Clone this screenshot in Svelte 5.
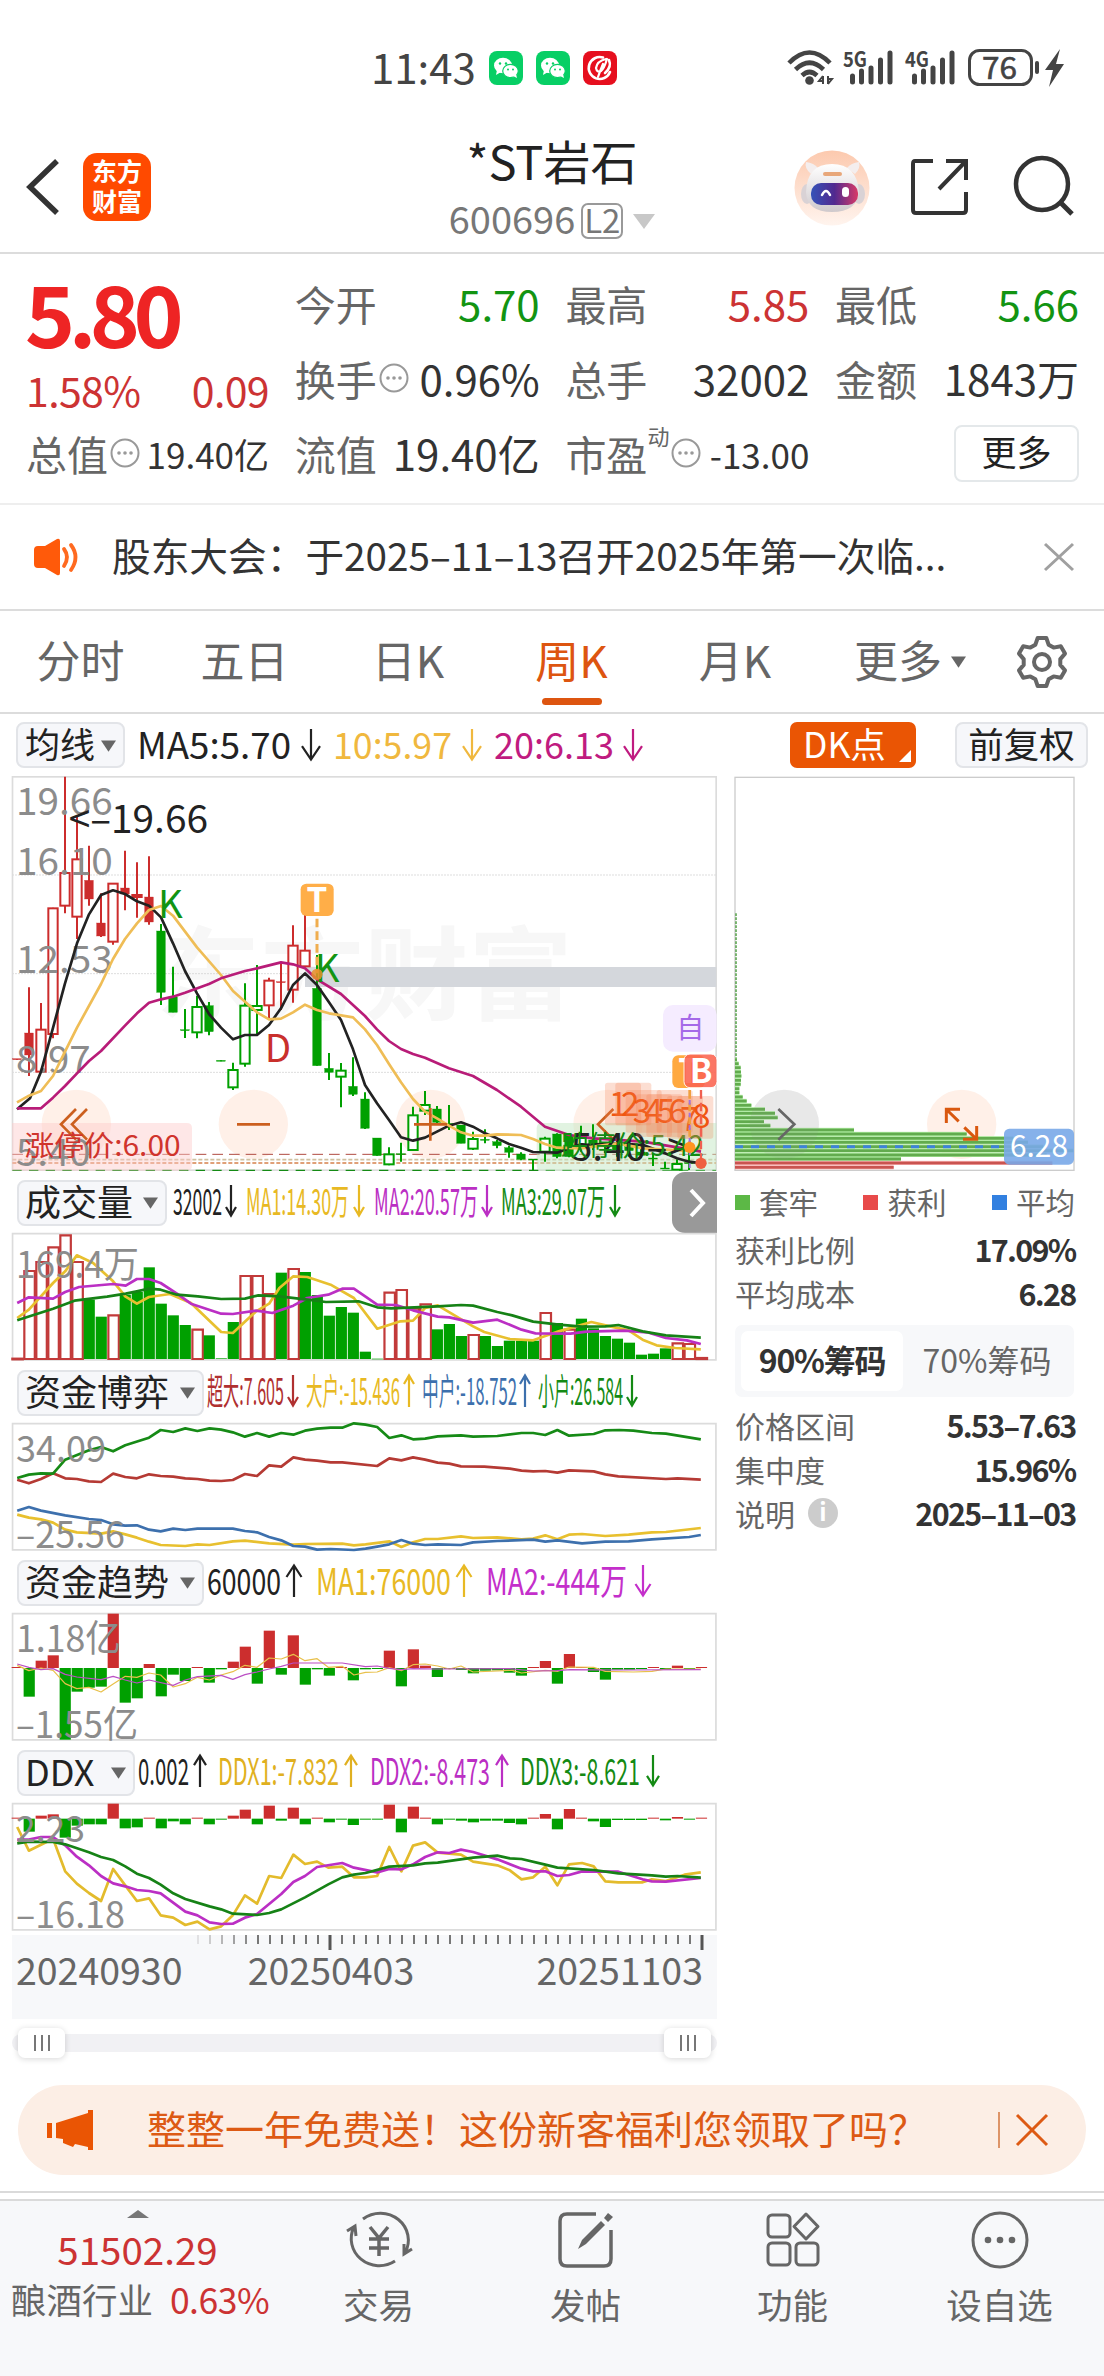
<script>
  // Quote summary
  const stats = [
    { label: '今开', value: '5.70', tone: 'down' },
    { label: '最高', value: '5.85', tone: 'up' },
    { label: '最低', value: '5.66', tone: 'down' },
    { label: '换手', value: '0.96%', hint: true },
    { label: '总手', value: '32002' },
    { label: '金额', value: '1843万' }
  ];

  const tabs = ['分时', '五日', '日K', '周K', '月K'];
  let activeTab = $state('周K');
  let chipRange = $state('90%筹码');

  // Candles: [color, hollow, high, top, bottom, low], one per week
  const candles = [
    ['r', 0, 897, 896, 899, 899], ['r', 0, 682, 819, 885, 948], ['r', 1, 729, 809, 935, 938], ['r', 1, 443, 445, 822, 835],
    ['r', 1, 50, 339, 437, 460], ['r', 1, 165, 298, 470, 537], ['r', 0, 257, 361, 417, 437], ['r', 0, 400, 489, 528, 531],
    ['r', 1, 370, 371, 545, 554], ['r', 0, 272, 384, 402, 451], ['r', 1, 307, 405, 411, 473], ['r', 0, 289, 411, 486, 494],
    ['g', 0, 492, 513, 697, 735], ['g', 0, 620, 711, 757, 757], ['g', 0, 747, 809, 812, 834], ['g', 1, 707, 741, 817, 835],
    ['g', 0, 726, 737, 815, 826], ['g', 0, 901, 901, 904, 904], ['g', 1, 908, 930, 982, 990], ['g', 1, 670, 737, 911, 920],
    ['g', 1, 615, 738, 750, 826], ['r', 1, 653, 662, 736, 775], ['r', 0, 608, 665, 668, 750], ['r', 1, 496, 557, 689, 728],
    ['r', 1, 450, 572, 619, 620], ['g', 0, 585, 685, 917, 917], ['g', 0, 879, 925, 937, 960], ['g', 1, 909, 932, 950, 1042],
    ['g', 0, 892, 979, 1003, 1008], ['g', 0, 997, 1017, 1105, 1107], ['g', 0, 1134, 1134, 1187, 1187], ['g', 1, 1162, 1183, 1213, 1216],
    ['g', 0, 1148, 1181, 1184, 1205], ['g', 1, 1040, 1066, 1170, 1173], ['g', 1, 993, 1035, 1052, 1065], ['g', 0, 1038, 1047, 1087, 1090],
    ['g', 0, 1035, 1090, 1093, 1110], ['g', 0, 1095, 1095, 1150, 1150], ['g', 1, 1115, 1137, 1166, 1170], ['g', 0, 1108, 1138, 1141, 1150],
    ['g', 0, 1140, 1145, 1157, 1165], ['g', 0, 1157, 1163, 1177, 1193], ['g', 0, 1177, 1182, 1198, 1201], ['g', 0, 1197, 1197, 1200, 1230],
    ['g', 1, 1130, 1136, 1175, 1205], ['g', 0, 1120, 1122, 1190, 1195], ['g', 0, 1120, 1125, 1190, 1192], ['g', 1, 1097, 1130, 1160, 1175],
    ['g', 0, 1093, 1140, 1160, 1170], ['g', 1, 1110, 1136, 1158, 1180], ['g', 0, 1120, 1150, 1170, 1190], ['g', 0, 1140, 1160, 1172, 1190],
    ['g', 0, 1150, 1176, 1186, 1195], ['g', 0, 1180, 1194, 1197, 1218], ['g', 0, 1205, 1224, 1227, 1227], ['g', 1, 1198, 1212, 1229, 1230],
    ['g', 0, 1150, 1208, 1211, 1230]
  ];
  const candleX = (i) => 51 + 36 * i;

  const priceLines = [
    { color: '#222', points: '51,1048 90,1015 123,935 160,800 195,670 231,550 267,463 303,405 339,391 375,402 411,424 447,437 483,472 519,550 555,633 591,700 627,762 663,803 699,838 735,825 771,825 807,795 843,745 879,675 915,640 951,675 987,727 1023,780 1059,868 1095,975 1131,1030 1167,1080 1203,1132 1239,1142 1275,1133 1311,1115 1347,1097 1383,1087 1419,1100 1455,1120 1491,1135 1527,1152 1563,1163 1599,1176 1671,1178 1707,1165 1743,1155 1850,1150 1930,1155 1995,1180 2031,1195 2067,1205 2103,1210' },
    { color: '#efbd56', points: '51,1027 87,1007 123,993 159,948 195,875 231,803 303,672 339,597 375,537 411,490 447,450 483,438 519,467 591,562 663,645 699,693 771,757 807,778 843,776 879,757 915,734 951,750 987,760 1059,772 1095,808 1131,855 1167,912 1203,967 1239,1017 1275,1055 1311,1075 1347,1097 1383,1117 1419,1127 1455,1127 1491,1123 1563,1125 1599,1137 1635,1152 1671,1163 1743,1165 1850,1150 1930,1165 2050,1172 2103,1165' },
    { color: '#b81c78', points: '51,1045 123,1045 159,1013 195,978 231,940 267,903 303,873 375,797 411,760 447,728 483,718 519,710 555,698 627,672 663,655 735,633 771,625 843,607 879,613 915,625 951,658 1023,702 1059,735 1095,768 1131,808 1167,843 1203,867 1239,882 1275,893 1347,925 1419,948 1491,990 1563,1040 1635,1100 1707,1125 1780,1135 1930,1145 2000,1157 2050,1165 2103,1175' }
  ];

  const priceLabels = [['19.66', 815], ['16.10', 875], ['12.53', 973], ['8.97', 1073], ['5.40', 1166]];

  // Overlapping sequence tiles near the last candles: [digit, tile top, baseline]
  const tiles = [[1, 968, 1067], [2, 968, 1067], [3, 990, 1090], [4, 1003, 1088], [5, 1003, 1088], [6, 990, 1088], [7, 1008, 1112], [8, 1008, 1105]];

  const volume = 'r565 r302 r275 r231 r195 r275 g390 g441 r435 g375 g367 g293 g402 g437 g466 r478 g497 g566 g457 r317 r317 r371 g309 r296 g307 g376 g438 g412 g429 g546 g567 r367 r359 r415 r402 g479 g463 g499 r494 g499 g529 g513 g513 g513 r428 g460 r478 g447 g476 g499 g507 g519 g555 g552 g536 r519 r521 r563';
  const trend = 'r352 g441 r333 r317 g570 g426 g414 g411 r192 g459 g446 r343 g440 g375 g394 r352 g399 g359 r336 r291 g402 r243 g375 r257 g405 g359 g378 r352 g392 g359 g358 r303 g410 r299 r348 g382 g358 g361 g371 g363 g362 g369 g378 r352 r334 g402 r313 r352 g367 g390 g360 g360 g358 r352 g360 r348 g358 r352';
  const ddx = 'r234 g276 r228 r224 g294 g258 g254 g254 r192 g266 g263 r234 g266 g245 g254 r234 g254 g240 r228 r210 g254 r198 g243 r204 g254 r234 g248 g240 g256 g240 g240 r195 g278 r201 r234 g254 g240 g243 g248 g243 g243 g250 g254 r234 r223 g269 r208 r234 g245 g262 g241 g241 g241 r234 g242 r232 g240 r234';

  const panels = [
    {
      name: '成交量',
      width: 150,
      arrow: 10,
      items: [
        ['32002', 173, 49, '#222', 231, 'down'],
        ['MA1:14.30万', 246, 103, '#e8b923', 359, 'down'],
        ['MA2:20.57万', 374, 104, '#bb2fc4', 487, 'down'],
        ['MA3:29.07万', 501, 104, '#148a14', 615, 'down']
      ],
      bars: volume, zero: 568, outlined: true,
      labels: [{ text: '169.4万', at: 'upper', width: 123 }],
      lines: [
        { color: '#e8c02f', points: '37,445 62,420 114,340 140,305 165,257 200,280 243,335 269,380 294,402 320,382 365,373 410,400 475,487 500,490 550,425 578,402 600,355 630,320 660,322 710,345 760,385 810,477 860,455 887,453 913,415 940,407 1016,470 1040,487 1095,508 1145,512 1200,485 1270,457 1310,470 1350,482 1380,510 1410,527 1450,535 1505,539' },
        { color: '#bb2fc4', points: '37,400 62,383 114,387 140,367 170,352 243,343 270,348 294,328 320,328 345,340 380,372 410,402 475,432 500,433 550,423 585,430 630,408 660,385 705,375 735,357 760,357 810,405 850,406 887,422 940,441 965,443 1016,459 1068,450 1120,480 1150,491 1225,492 1260,486 1340,483 1390,488 1430,505 1475,512 1505,523' },
        { color: '#168216', points: '37,452 114,417 160,393 230,381 270,372 294,365 320,357 345,360 380,375 425,380 475,388 526,387 555,377 600,380 660,390 700,397 770,395 810,413 840,416 940,410 990,406 1016,408 1068,427 1100,437 1145,456 1200,465 1250,471 1300,470 1328,466 1380,485 1430,497 1505,504' }
      ]
    },
    {
      name: '资金博弈',
      width: 187,
      arrow: 10,
      items: [
        ['超大:7.605', 207, 77, '#b03030', 293, 'down'],
        ['大户:-15.436', 306, 94, '#e8b923', 409, 'up'],
        ['中户:-18.752', 422, 95, '#3d70ad', 525, 'up'],
        ['小户:26.584', 538, 85, '#148a14', 632, 'down']
      ],
      bars: '', zero: 0,
      labels: [{ text: '34.09', at: 'top', width: 90 }, { text: '-25.56', at: 'bottom', width: 109 }],
      lines: [
        { color: '#b53a34', points: '37,360 62,371 88,358 114,341 140,356 165,358 191,365 217,367 243,342 269,352 294,356 320,344 345,349 372,351 398,356 424,358 450,363 475,364 500,361 526,343 552,349 578,317 604,321 630,293 655,300 681,303 710,308 735,308 810,319 836,296 862,302 887,293 913,300 940,309 965,312 990,320 1040,321 1095,327 1120,333 1145,335 1171,334 1197,339 1222,332 1275,335 1300,344 1328,350 1430,358 1455,356 1505,360' },
        { color: '#168a16', points: '37,355 62,345 88,341 114,342 140,300 191,272 217,262 243,275 269,257 320,234 345,211 372,217 398,206 424,214 450,206 475,210 500,218 526,231 552,220 578,231 604,220 630,225 655,213 681,207 710,204 735,204 760,191 785,195 810,202 836,235 862,227 887,239 913,237 940,230 990,227 1016,231 1068,229 1120,220 1145,220 1171,226 1197,211 1222,228 1275,223 1300,212 1330,211 1360,213 1400,220 1430,222 1505,239' },
        { color: '#e8c02f', points: '37,465 62,474 88,479 114,489 140,510 165,518 217,522 243,515 269,524 294,534 320,546 345,556 398,559 424,554 450,556 500,545 526,543 578,551 630,555 655,553 735,552 760,557 785,554 836,545 862,562 887,548 913,538 940,538 990,530 1016,535 1068,533 1120,539 1145,537 1171,527 1197,539 1222,525 1250,523 1300,529 1350,525 1400,518 1430,517 1505,505' },
        { color: '#3d70ad', points: '37,453 62,442 88,453 140,467 191,478 217,481 243,494 269,498 294,497 320,510 345,515 372,507 398,511 424,507 500,507 526,514 552,518 578,532 604,542 630,559 655,561 681,570 710,568 760,571 785,567 810,561 836,554 862,541 887,552 913,556 940,554 990,556 1016,548 1068,544 1145,540 1171,546 1197,542 1250,551 1300,546 1350,545 1400,539 1480,532 1505,526' }
      ]
    },
    {
      name: '资金趋势',
      width: 187,
      arrow: 15,
      items: [
        ['60000', 207, 74, '#222', 294, 'up'],
        ['MA1:76000', 316, 135, '#e8b923', 464, 'up'],
        ['MA2:-444万', 486, 141, '#c42fcb', 643, 'down']
      ],
      bars: trend, zero: 355,
      thin: true,
      labels: [{ text: '1.18亿', at: 'top', width: 105 }, { text: '-1.55亿', at: 'bottom', width: 122 }],
      lines: [
        { color: '#e8c04a', points: '37,347 62,363 88,355 114,362 140,402 165,417 191,413 217,427 243,403 269,380 294,383 320,370 345,376 372,412 398,402 424,383 450,391 475,376 500,366 526,347 552,353 578,325 604,328 630,314 655,333 681,327 705,353 735,350 760,376 785,368 810,367 836,354 862,363 887,345 913,343 940,349 965,358 990,349 1016,367 1100,362 1120,370 1171,362 1197,365 1222,352 1275,353 1300,365 1360,367 1400,365 1430,358 1505,358' },
        { color: '#bb4fc4', points: '37,343 62,353 88,360 114,357 140,374 165,382 217,390 243,380 269,391 294,400 320,391 372,407 398,391 424,381 475,377 500,389 526,375 552,367 578,358 604,350 630,340 735,340 785,351 810,349 836,356 862,360 887,357 940,358 1095,357 1145,364 1197,363 1225,360 1330,361 1505,360' }
      ]
    },
    {
      name: 'DDX',
      width: 118,
      arrow: 12,
      items: [
        ['0.002', 138, 51, '#222', 200, 'up'],
        ['DDX1:-7.832', 218, 121, '#e0b020', 351, 'up'],
        ['DDX2:-8.473', 370, 120, '#bb2fc4', 502, 'up'],
        ['DDX3:-8.621', 520, 120, '#148a14', 653, 'down']
      ],
      bars: ddx, zero: 237,
      labels: [{ text: '2.23', at: 'top', width: 69 }, { text: '-16.18', at: 'bottom', width: 109 }],
      lines: [
        { color: '#e3bb2c', points: '37,262 62,333 114,297 140,395 165,432 191,460 217,484 243,388 269,437 294,484 320,476 345,527 372,534 398,556 424,546 450,569 475,560 500,527 526,467 552,492 578,409 604,415 630,345 655,373 681,366 705,384 735,381 760,413 785,413 810,409 836,322 862,395 887,318 913,308 940,339 990,345 1016,366 1068,377 1095,392 1120,419 1145,413 1171,381 1197,437 1222,374 1250,370 1275,380 1300,425 1328,428 1380,428 1400,419 1430,424 1470,405 1505,398' },
        { color: '#bb2fc4', points: '37,300 62,300 88,292 114,292 140,317 165,351 191,377 217,409 243,431 269,440 294,451 320,454 345,461 398,516 424,527 450,548 475,553 500,552 526,534 552,523 604,463 630,427 655,409 681,382 735,370 760,384 810,398 836,388 862,389 887,374 913,352 940,338 965,340 990,330 1016,337 1068,359 1120,387 1145,395 1171,395 1197,409 1222,406 1250,395 1328,396 1380,419 1400,425 1430,426 1505,415' },
        { color: '#168216', points: '37,311 62,306 114,307 140,314 191,338 217,352 243,361 269,380 294,402 320,415 345,435 372,461 398,478 450,500 475,509 500,522 552,526 578,520 604,509 655,473 705,434 735,413 760,405 785,400 836,381 887,377 913,371 940,369 1016,354 1068,348 1095,356 1120,358 1171,375 1197,384 1275,391 1328,401 1400,407 1430,411 1455,409 1505,414' }
      ]
    }
  ];

  // Splits "r302 g390 ..." into bars around the zero line
  function toBars(text, zero) {
    return text.split(' ').filter(Boolean).map((token, i) => {
      const y = Number(token.slice(1));
      return { red: token[0] === 'r', cx: 36.5 + 25.78 * i, top: Math.min(y, zero), height: Math.max(Math.abs(y - zero), 2) };
    });
  }

  // Cost distribution: [y, right edge]
  const chips = [
    [899, 111], [911, 116], [923, 122], [936, 123], [948, 124], [961, 123], [973, 122], [986, 118], [998, 118], [1011, 128],
    [1023, 140], [1036, 154], [1048, 195], [1060, 225], [1073, 233], [1085, 192], [1097, 211], [1110, 462], [1122, 800],
    [1135, 940], [1147, 984], [1160, 1030], [1172, 1120], [1185, 1040], [1197, 603], [1209, 1057], [1222, 581]
  ];

  const costRows = [['获利比例', '17.09%'], ['平均成本', '6.28']];
  const rangeRows = [['价格区间', '5.53–7.63'], ['集中度', '15.96%'], ['说明', '2025–11–03']];

  const ticks = Array.from({ length: 43 }, (_, i) => 702 - 12 * i);

  // Gear outline with six teeth
  const gear = Array.from({ length: 6 }, (_, k) => k * 60 - 90)
    .flatMap((a) => [[-21, 18.5], [-10, 24.5], [10, 24.5], [21, 18.5]].map(([d, r]) => {
      const t = ((a + d) * Math.PI) / 180;
      return `${(27 + r * Math.cos(t)).toFixed(1)},${(27 + r * Math.sin(t)).toFixed(1)}`;
    }))
    .join(' ');
</script>

{#snippet hintIcon()}
  <svg class="hint" viewBox="0 0 30 30" width="30" height="30">
    <circle cx="15" cy="15" r="13.5" fill="none" stroke="#999" stroke-width="2" />
    <circle cx="9" cy="15" r="1.8" fill="#999" /><circle cx="15" cy="15" r="1.8" fill="#999" /><circle cx="21" cy="15" r="1.8" fill="#999" />
  </svg>
{/snippet}

{#snippet caret()}
  <svg viewBox="0 0 16 12" width="15" height="12"><path d="M0 0h16L8 12z" fill="#666" /></svg>
{/snippet}

{#snippet readout(items, arrow)}
  {#each items as [text, x, width, color, ax, dir]}
    <text {x} y="44" fill={color} textLength={width} lengthAdjust="spacingAndGlyphs">{text}</text>
    {#if dir === 'down'}
      <path d="M{ax} 14V44M{ax - arrow / 2} {42 - arrow * 0.6}L{ax} 44.500L{ax + arrow / 2} {42 - arrow * 0.6}" stroke={color} stroke-width="2.2" fill="none" />
    {:else}
      <path d="M{ax} 46V15M{ax - arrow / 2} {17 + arrow * 0.6}L{ax} 14.500L{ax + arrow / 2} {17 + arrow * 0.6}" stroke={color} stroke-width="2.2" fill="none" />
    {/if}
  {/each}
{/snippet}

{#snippet wechat()}
  <svg viewBox="0 0 34 34" width="34" height="34">
    <rect width="34" height="34" rx="8" fill="#07cf65" />
    <ellipse cx="14" cy="14.5" rx="9" ry="7.8" fill="#fff" />
    <path d="M8 19l-1 5 5-3z" fill="#fff" />
    <ellipse cx="21.5" cy="20" rx="7.8" ry="6.6" fill="#fff" stroke="#07cf65" stroke-width="1.2" />
    <path d="M24 25l4 2-1-4z" fill="#fff" />
    <circle cx="11" cy="12.5" r="1.2" fill="#07cf65" /><circle cx="17" cy="12.5" r="1.2" fill="#07cf65" />
    <circle cx="19" cy="18.5" r="1" fill="#07cf65" /><circle cx="24" cy="18.5" r="1" fill="#07cf65" />
  </svg>
{/snippet}

{#snippet signal(label)}
  <svg viewBox="0 0 52 36" width="52" height="36">
    <text x="0" y="17" font-size="21" font-weight="bold" fill="#444" textLength="24" lengthAdjust="spacingAndGlyphs">{label}</text>
    <path d="M9.500 32V26M18.500 32V21M28 32V18M37.500 32V10M47 32V3" stroke="#444" stroke-width="5" stroke-linecap="round" />
  </svg>
{/snippet}

<div class="screen">
  <div class="status">
    <div class="status-left">
      <span class="clock">11:43</span>
      {@render wechat()}
      {@render wechat()}
      <svg viewBox="0 0 34 34" width="34" height="34">
        <rect width="34" height="34" rx="8" fill="#e60f1e" />
        <path d="M20 6.500A11 11 0 1 0 27 21M26 9Q29 16 22 22" fill="none" stroke="#fff" stroke-width="2.600" stroke-linecap="round" />
        <path d="M23 8Q14 10 13 17Q14 22 18 20Q21 18 24 8M20 13Q17 20 15 26" fill="none" stroke="#fff" stroke-width="2.200" stroke-linecap="round" />
      </svg>
    </div>
    <div class="status-right">
      <svg class="wifi" viewBox="0 0 46 36" width="46" height="36">
        <path d="M2 13Q22.500-8 43 13M8.500 19.500Q22.500 6 36.500 19.500M15 25.500Q22.500 18.500 30 25.500" fill="none" stroke="#444" stroke-width="4.600" />
        <circle cx="22.500" cy="30.500" r="4.300" fill="#444" />
        <path d="M36 26v8M36 26l-4 5h4M41 34v-8M41 34l4-5h-4" stroke="#444" stroke-width="2" fill="none" />
      </svg>
      {@render signal('5G')}
      {@render signal('4G')}
      <svg class="battery" viewBox="0 0 98 38" width="98" height="38">
        <rect x="1.500" y="1.500" width="62" height="34" rx="10" fill="none" stroke="#444" stroke-width="3" />
        <path d="M69 14v9" stroke="#444" stroke-width="4" stroke-linecap="round" />
        <text x="14" y="29.500" font-size="30" fill="#444" stroke="#444" stroke-width=".6" textLength="35" lengthAdjust="spacingAndGlyphs">76</text>
        <path d="M92 0L77 21h8l-4 17 15-23h-8z" fill="#444" />
      </svg>
    </div>
  </div>

  <header class="header">
    <div class="side">
      <svg class="back" viewBox="0 0 36 58" width="36" height="58">
        <path d="M34 3L7 29l27 26" fill="none" stroke="#333" stroke-width="5.500" />
      </svg>
      <div class="brand"><span>东方</span><span>财富</span></div>
    </div>
    <div class="title">
      <h1>*ST岩石</h1>
      <div class="code">
        <span>600696</span>
        <span class="level">L2</span>
        <svg viewBox="0 0 22 15" width="22" height="15"><path d="M0 0h22L11 15z" fill="#c8c8c8" /></svg>
      </div>
    </div>
    <div class="side actions">
      <svg viewBox="0 0 76 76" width="76" height="76">
        <defs>
          <linearGradient id="halo" x1="0" y1="0" x2="0" y2="1"><stop offset="0" stop-color="#fcc9ae" /><stop offset="1" stop-color="#fff4ee" /></linearGradient>
          <linearGradient id="visor" x1="0" y1="0" x2="1" y2="0"><stop offset="0" stop-color="#3553b8" /><stop offset=".5" stop-color="#51298f" /><stop offset="1" stop-color="#d83a68" /></linearGradient>
          <linearGradient id="head" x1="0" y1="0" x2="0" y2="1"><stop offset="0" stop-color="#fff" /><stop offset="1" stop-color="#cfc9cc" /></linearGradient>
        </defs>
        <circle cx="38" cy="38" r="37.500" fill="url(#halo)" />
        <path d="M17 24q-7-6-5-12 8 1 12 6zM61 24q6-6 4-12-8 1-12 6z" fill="#f4eeee" />
        <ellipse cx="13" cy="44" rx="6" ry="10" fill="#d9d2d5" /><ellipse cx="65" cy="44" rx="6" ry="10" fill="#d9d2d5" />
        <path d="M12 42q1-28 26-28t27 28q-2 20-27 20T12 42z" fill="url(#head)" />
        <rect x="29" y="22" width="19" height="4" rx="2" fill="#e8a77a" />
        <rect x="17" y="33" width="47" height="22" rx="10" fill="url(#visor)" />
        <path d="M28 45q4-8 8 0" fill="none" stroke="#fff" stroke-width="2.500" stroke-linecap="round" />
        <rect x="48" y="37" width="7" height="10" rx="3.500" fill="#fff" />
      </svg>
      <svg class="share" viewBox="0 0 62 60" width="62" height="60">
        <path d="M24 4H6Q4 4 4 7V53Q4 56 7 56H54Q57 56 57 53V35M37 4H57V23M57 4L30 32" fill="none" stroke="#333" stroke-width="4" />
      </svg>
      <svg class="search" viewBox="0 0 62 62" width="62" height="62">
        <circle cx="29" cy="29" r="26" fill="none" stroke="#333" stroke-width="4.500" />
        <path d="M47 47L59 59" stroke="#333" stroke-width="5" />
      </svg>
    </div>
  </header>

  <section class="quote">
    <div class="price">
      <strong>5.80</strong>
      <div class="change"><span>1.58%</span><span>0.09</span></div>
    </div>
    {#each stats as stat}
      <div class="stat">
        <span class="label">{stat.label}{#if stat.hint}{@render hintIcon()}{/if}</span>
        <span class="value {stat.tone ?? ''}">{stat.value}</span>
      </div>
    {/each}
    <div class="stat">
      <span class="label">总值{@render hintIcon()}</span>
      <span class="value small">19.40亿</span>
    </div>
    <div class="stat">
      <span class="label">流值</span>
      <span class="value">19.40亿</span>
    </div>
    <div class="stat">
      <span class="label">市盈<sup>动</sup>{@render hintIcon()}</span>
      <span class="value small">-13.00</span>
    </div>
    <div class="stat end"><button class="more">更多</button></div>
  </section>

  <section class="notice">
    <svg viewBox="0 0 46 38" width="46" height="38">
      <path d="M4 8h7L23 1q3-1 3 2v32q0 3-3 2L11 30H4q-4 0-4-4V12q0-4 4-4z" fill="#ff5a0a" />
      <path d="M30 11q6 8 0 17M37 7q9 12 0 25" fill="none" stroke="#ff6a20" stroke-width="3.800" stroke-linecap="round" />
    </svg>
    <p>股东大会：于2025–11–13召开2025年第一次临...</p>
    <svg viewBox="0 0 30 28" width="30" height="28"><path d="M1 1L29 27M29 1L1 27" stroke="#a0a0a0" stroke-width="3" /></svg>
  </section>

  <nav class="tabs">
    {#each tabs as tab}
      <button class="tab" class:active={tab === activeTab} onclick={() => (activeTab = tab)}>{tab}</button>
    {/each}
    <button class="tab menu">更多{@render caret()}</button>
    <svg class="gear" viewBox="0 0 54 54" width="54" height="54">
      <polygon points={gear} fill="none" stroke="#666" stroke-width="4" stroke-linejoin="round" />
      <circle cx="27" cy="27" r="8" fill="none" stroke="#666" stroke-width="4" />
    </svg>
  </nav>

  <div class="toolbar">
    <button class="pill avg">均线{@render caret()}</button>
    <svg class="readout" viewBox="128 0 540 60" width="540" height="60">
      {@render readout([['MA5:5.70', 137, 154, '#222', 311, 'down'], ['10:5.97', 333, 119, '#f0b83e', 472, 'down'], ['20:6.13', 494, 120, '#c01b80', 633, 'down']], 18)}
    </svg>
    <button class="dk">DK点<svg viewBox="0 0 12 12" width="12" height="12"><path d="M12 0V12H0z" fill="#fff" /></svg></button>
    <button class="pill adjust">前复权</button>
  </div>

  <main class="body">
    <div class="charts">
      <svg class="kline" viewBox="36 48 2115 1185" width="705" height="395">
        <text x="468" y="757" font-size="305" font-weight="bold" fill="#f7f7f7" textLength="1250" lengthAdjust="spacingAndGlyphs">东方财富</text>
        <path d="M37 345H2148M37 641H2148M37 937H2148" stroke="#ccc" stroke-width="3" stroke-dasharray="4 5" />
        <rect x="37.500" y="50.500" width="2111" height="1180" fill="none" stroke="#dcdcdc" stroke-width="5" />
        <g fill="#fff0e8">
          <circle cx="229" cy="1093" r="104" /><circle cx="760" cy="1093" r="104" /><circle cx="1292" cy="1093" r="104" /><circle cx="1824" cy="1093" r="104" />
        </g>
        <rect x="915" y="621" width="1234" height="60" fill="#d4d7dc" />
        <path d="M37 1183H2148" stroke="#b04a40" stroke-width="3" stroke-dasharray="32 18" />
        <path d="M37 1199H2148" stroke="#cfc0a0" stroke-width="5" stroke-dasharray="12 6" />
        <path d="M37 1209H2148" stroke="#e0a078" stroke-width="6" stroke-dasharray="12 6" />
        <path d="M37 1231H2148" stroke="#148a14" stroke-width="4" stroke-dasharray="28 22" />

        <path d="M36 1089H560q16 0 16 16V1216q0 16-16 16H36z" fill="#fdc9c9" opacity=".45" />
        <path d="M2149 1089H1626q-16 0-16 16V1216q0 16 16 16H2149z" fill="#c3e8c3" opacity=".5" />

        {#each candles as [tone, hollow, high, top, bottom, low], i}
          {@const x = candleX(i)}
          {@const color = tone === 'r' ? '#cc2c2c' : '#00a000'}
          <path d="M{x} {high}V{low}" stroke={color} stroke-width="6" />
          <rect x={hollow ? x - 14 : x - 13} y={top} width={hollow ? 28 : 26} height={Math.max(bottom - top, 3)} fill={hollow ? '#fff' : color} stroke={color} stroke-width={hollow ? 6 : 1} />
        {/each}

        <g fill="#8c8c8c" font-size="115">
          {#each priceLabels as [text, y]}
            <text x="48" y={(y - 760) * 3} textLength={text.length === 5 ? 290 : 224} lengthAdjust="spacingAndGlyphs">{text}</text>
          {/each}
        </g>
        {#each priceLines as line}
          <polyline points={line.points} fill="none" stroke={line.color} stroke-width="8" stroke-linejoin="round" />
        {/each}
        <text x="206" y="218" font-size="115" fill="#222" textLength="418" lengthAdjust="spacingAndGlyphs">&lt;–19.66</text>

        <g font-size="115">
          <text x="474" y="475" fill="#129412">K</text>
          <text x="944" y="667" fill="#129412">K</text>
          <text x="794" y="906" fill="#c9302c">D</text>
        </g>
        <path d="M951 476V640" stroke="#f0ad4e" stroke-width="9" stroke-dasharray="26 12" />
        <circle cx="951" cy="643" r="17" fill="#e8912c" opacity=".85" />
        <rect x="902" y="371" width="99" height="97" rx="17" fill="#ffae48" />
        <text x="951" y="456" font-size="100" font-weight="bold" fill="#fff" text-anchor="middle">T</text>

        <g fill="none" stroke="#cc5f1e" stroke-width="8">
          <path d="M228 1047L183 1093L228 1139M261 1047L216 1093L261 1139" />
          <path d="M711 1093H810M1242 1093H1341M1291 1044V1142" />
          <path d="M1840 1047L1794 1093L1840 1139" />
        </g>

        <text x="73" y="1188" font-size="86" fill="#d0342c" textLength="469" lengthAdjust="spacingAndGlyphs">涨停价:6.00</text>
        <text x="1712" y="1203" font-size="115" fill="#222" textLength="355" lengthAdjust="spacingAndGlyphs">5.40–&gt;</text>
        <text x="1683" y="1188" font-size="86" fill="#148a14" textLength="428" lengthAdjust="spacingAndGlyphs">跌停价:5.42</text>

        {#each tiles as [digit, top, base], i}
          <rect x={1815 + i * 31} y={top} width="108" height="128" rx="8" fill="#f58050" opacity=".26" />
          <text x={1855 + i * 35.500} y={base} font-size="100" fill="#f05510" text-anchor="middle">{digit}</text>
        {/each}

        <path d="M2069 990V1160" stroke="#f0a040" stroke-width="8" stroke-dasharray="26 12" />
        <path d="M2069 1020V1230" stroke="#a070e0" stroke-width="6" stroke-dasharray="14 24" />
        <path d="M2103 990V1200" stroke="#f06050" stroke-width="7" stroke-dasharray="26 12" />
        <circle cx="2069" cy="1162" r="17" fill="#ff9420" />
        <circle cx="2103" cy="1210" r="17" fill="#ef6040" />
        <rect x="1989" y="735" width="161" height="140" rx="30" fill="#f5ecff" />
        <text x="2071" y="834" font-size="84" fill="#a569e8" text-anchor="middle">自</text>
        <rect x="2017" y="886" width="98" height="98" rx="18" fill="#ffa940" />
        <text x="2066" y="970" font-size="100" font-weight="bold" fill="#fff" text-anchor="middle">T</text>
        <rect x="2052" y="882" width="99" height="101" rx="18" fill="#fb6450" opacity=".88" stroke="#fff" stroke-width="3" />
        <text x="2103" y="970" font-size="100" font-weight="bold" fill="#fff" text-anchor="middle">B</text>
      </svg>

      {#each panels as panel, p}
        <div class="panel-head">
          <button class="pill" style="width: {panel.width}px">{panel.name}{@render caret()}</button>
          <svg class="readout" viewBox="{17 + panel.width} 0 {683 - panel.width} 62" width={683 - panel.width} height="62">
            {@render readout(panel.items, panel.arrow)}
          </svg>
          {#if p === 0}
            <button class="expand" aria-label="展开">
              <svg viewBox="0 0 18 30" width="18" height="30"><path d="M3 2L15 15L3 28" fill="none" stroke="#fff" stroke-width="4" /></svg>
            </button>
          {/if}
        </div>
        <div class="panel">
          <svg class="plot" viewBox="25.8 190 1514 384" width="705" height="128" preserveAspectRatio="none">
            <rect x="27" y="192" width="1510.500" height="378.500" fill="none" stroke="#dcdcdc" stroke-width="1.700" />
            {#each toBars(panel.bars, panel.zero) as bar}
              {#if panel.outlined && bar.red}
                <rect x={bar.cx - 10} y={bar.top + 2} width="22.500" height={Math.max(bar.height - 2, 2)} fill="#fff" stroke="#c23a3a" stroke-width="2.200" />
              {:else}
                <rect x={bar.cx - 11.500} y={bar.top} width="24" height={bar.height} fill={bar.red ? '#cc2e2e' : '#00a000'} />
              {/if}
            {/each}
            {#each panel.lines as line}
              <polyline points={line.points} fill="none" stroke={line.color} stroke-width={panel.thin ? 1.2 : 2.7} stroke-linejoin="round" />
            {/each}
          </svg>
          {#each panel.labels as label}
            <svg class="axis {label.at}" viewBox="0 0 {label.width} 40" width={label.width} height="40">
              <text x="-1" y="32" textLength={label.width} lengthAdjust="spacingAndGlyphs">{label.text.replace('-', '–')}</text>
            </svg>
          {/each}
        </div>
      {/each}

      <div class="timeline">
        <svg viewBox="12 0 705 16" width="705" height="16">
          {#each ticks as x, i}
            <path d="M{x} 0V{x === 702 || x === 330 ? 15 : 9}" stroke={x === 702 || x === 330 ? '#555' : '#777'} stroke-width={x === 702 || x === 330 ? 3 : 2} opacity={Math.min(1, (43 - i) / 6)} />
          {/each}
        </svg>
        <div class="dates"><span>20240930</span><span>20250403</span><span>20251103</span></div>
      </div>
      <div class="slider">
        <span class="thumb"><i></i><i></i><i></i></span>
        <span class="thumb"><i></i><i></i><i></i></span>
      </div>
    </div>

    <aside class="chips">
      <svg viewBox="102 48 1023 1185" width="341" height="395">
        <rect x="105" y="52" width="1017" height="1179" fill="none" stroke="#ccc" stroke-width="4" />
        <path d="M108 460V905" stroke="#63a858" stroke-width="5" stroke-dasharray="8 4" />
        <circle cx="253" cy="1093" r="104" fill="#f3f3f3" />
        <circle cx="785" cy="1093" r="104" fill="#fff0e8" />
        {#each chips as [y, right], i}
          <rect x="105" y={y - 6.500} width={right - 105} height="12.500" fill={i > 24 ? '#f8b0b0' : '#a9e79b'} />
          <rect x="105" y={y - 4} width={right - 105} height="8" fill={i > 24 ? '#c95450' : '#62ab4e'} />
        {/each}
        <circle cx="253" cy="1093" r="104" fill="#888" opacity=".1" />
        <path d="M105 1160H915" stroke="#3d82dc" stroke-width="9" stroke-dasharray="24 24" />
        <path d="M235 1047L283 1093L235 1139" fill="none" stroke="#666" stroke-width="8" />
        <path d="M739 1089V1048H780M741 1050L776 1084M830 1098V1138H789M828 1136L793 1102" fill="none" stroke="#d9580f" stroke-width="9" />
        <rect x="912" y="1106" width="210" height="108" rx="16" fill="#79a9e8" opacity=".9" />
        <text x="930" y="1190" font-size="90" fill="#fff" textLength="174" lengthAdjust="spacingAndGlyphs">6.28</text>
      </svg>
      <div class="legend">
        <span><i class="green"></i>套牢</span>
        <span><i class="red"></i>获利</span>
        <span><i class="blue"></i>平均</span>
      </div>
      {#each costRows as [label, value]}
        <div class="row"><span>{label}</span><b>{value}</b></div>
      {/each}
      <div class="segment">
        {#each ['90%筹码', '70%筹码'] as option}
          <button class:on={option === chipRange} onclick={() => (chipRange = option)}>{option}</button>
        {/each}
      </div>
      {#each rangeRows as [label, value]}
        <div class="row">
          <span>{label}{#if label === '说明'}<em>i</em>{/if}</span><b>{value}</b>
        </div>
      {/each}
    </aside>
  </main>

  <div class="promo">
    <svg viewBox="0 0 47 40" width="47" height="40">
      <path d="M0 13h5v15H0zM9 13L41 3V0h5v40h-5v-3l-13-3-2 3-10-4v-4l-7-1z" fill="#ea5504" />
    </svg>
    <p>整整一年免费送！这份新客福利您领取了吗？</p>
    <span class="bar"></span>
    <svg viewBox="0 0 32 32" width="32" height="32"><path d="M1 1L31 31M31 1L1 31" stroke="#dd5a14" stroke-width="3" /></svg>
  </div>

  <footer class="footer">
    <div class="index">
      <svg viewBox="0 0 22 8" width="22" height="8"><path d="M0 8h22L11 0z" fill="#777" /></svg>
      <span class="points">51502.29</span>
      <span class="sector">酿酒行业<b>0.63%</b></span>
    </div>
    <div class="item">
      <svg viewBox="0 0 66 58" width="66" height="58" fill="none" stroke="#666" stroke-width="3">
        <path d="M17 8A28 27 0 0 1 59 42M49 50A28 27 0 0 1 8 16M1 20L9 15L10 25M58 33V43L66 38" />
        <path d="M24 16L33 27L42 16M23 28H43M23 37H43M33 27V45" stroke-width="3.500" />
      </svg>
      <span>交易</span>
    </div>
    <div class="item">
      <svg viewBox="0 0 58 58" width="58" height="58" fill="none" stroke="#666" stroke-width="3.500">
        <path d="M39 3H10Q3 3 3 10V48Q3 55 10 55H47Q54 55 54 48V19" />
        <path d="M21 38L25 29L44 10L48 14L29 33zM47 7L51 2L56 6L51 11z" fill="#666" stroke="none" />
      </svg>
      <span>发帖</span>
    </div>
    <div class="item">
      <svg viewBox="0 0 56 58" width="56" height="58" fill="none" stroke="#666" stroke-width="3">
        <rect x="3" y="4" width="22" height="22" rx="4" /><rect x="3" y="32" width="22" height="22" rx="4" /><rect x="31" y="32" width="22" height="22" rx="4" />
        <path d="M41 3L53 15.500L41 28L29 15.500z" stroke-linejoin="round" />
      </svg>
      <span>功能</span>
    </div>
    <div class="item">
      <svg viewBox="0 0 58 58" width="58" height="58">
        <circle cx="29" cy="29" r="27" fill="none" stroke="#666" stroke-width="3" />
        <g fill="#666"><circle cx="17" cy="29" r="3.300" /><circle cx="29" cy="29" r="3.300" /><circle cx="41" cy="29" r="3.300" /></g>
      </svg>
      <span>设自选</span>
    </div>
  </footer>
</div>

<style>
  :global(body) {
    background: #fff;
  }

  .screen {
    width: 1104px;
    height: 2376px;
    overflow: hidden;
    display: flex;
    flex-direction: column;
    font-family: 'Noto Sans CJK SC', 'Noto Sans', sans-serif;
    color: #333;
    line-height: 1;
    white-space: nowrap;
  }

  svg {
    display: block;
    flex: none;
    overflow: visible;
  }

  button {
    font: inherit;
    color: inherit;
    border: 0;
    background: none;
    padding: 0;
    line-height: 1;
  }

  p,
  h1 {
    margin: 0;
    font-weight: 400;
  }

  /* Status bar */
  .status {
    height: 136px;
    display: flex;
    align-items: center;
    justify-content: space-between;
    padding: 0 38px 0 371px;
    box-sizing: border-box;
    color: #444;
  }

  .status-left,
  .status-right {
    display: flex;
    align-items: center;
  }

  .status-left {
    gap: 13px;
  }

  .clock {
    font-size: 42px;
    position: relative;
    top: -2px;
  }

  .status-right {
    gap: 10px;
  }

  .battery {
    margin-left: 1px;
  }

  /* Title bar */
  .header {
    height: 118px;
    display: flex;
    justify-content: space-between;
    border-bottom: 2px solid #dcdcdc;
    box-sizing: border-box;
  }

  .side {
    width: 310px;
    display: flex;
    padding: 16px 0 0 23px;
    box-sizing: border-box;
  }

  .back {
    margin-top: 6px;
  }

  .brand {
    width: 68px;
    height: 68px;
    margin: 1px 0 0 24px;
    border-radius: 14px;
    background: #ff4a00;
    color: #fff;
    font-weight: bold;
    font-size: 25px;
    display: flex;
    flex-direction: column;
    align-items: center;
    justify-content: center;
    gap: 5px;
    padding-bottom: 4px;
    box-sizing: border-box;
  }

  .title {
    display: flex;
    flex-direction: column;
    align-items: center;
  }

  h1 {
    font-size: 47px;
    color: #222;
  }

  .code {
    display: flex;
    align-items: center;
    gap: 6px;
    font-size: 38px;
    color: #777;
    margin-top: 19px;
    height: 38px;
  }

  .code > span:first-child {
    position: relative;
    top: -3px;
  }

  .level {
    border: 2px solid #999;
    border-radius: 7px;
    font-size: 33px;
    width: 42px;
    height: 36px;
    line-height: 29px;
    box-sizing: border-box;
    text-align: center;
  }

  .code svg {
    margin-left: 4px;
  }

  .actions {
    padding: 14px 29px 0 0;
    justify-content: flex-end;
  }

  .share {
    margin: 7px 42px 0 39px;
  }

  .search {
    margin-top: 5px;
  }

  /* Quote */
  .quote {
    height: 251px;
    display: grid;
    grid-template-columns: 243px 245px 244px 244px;
    grid-template-rows: repeat(3, 75px);
    column-gap: 25.700px;
    padding: 12px 0 0 26px;
    box-sizing: border-box;
    border-bottom: 2px solid #eee;
  }

  .price {
    grid-row: 1 / 3;
    color: #cc3333;
    display: flex;
    flex-direction: column;
  }

  .price strong {
    font-size: 85px;
    line-height: 98px;
    letter-spacing: -6.500px;
    color: #ee2424;
    margin: -4px 0 0 -1px;
  }

  .change {
    display: flex;
    justify-content: space-between;
    font-size: 41px;
    line-height: 50px;
    padding-top: 4px;
    letter-spacing: -0.6px;
  }

  .stat {
    display: flex;
    align-items: center;
    justify-content: space-between;
    font-size: 42px;
    padding-bottom: 1px;
  }

  .stat.end {
    justify-content: flex-end;
  }

  .label {
    color: #666;
    font-size: 41px;
    display: flex;
    align-items: center;
  }

  .label :global(.hint) {
    margin: 0 0 0 2px;
  }

  .label sup {
    font-size: 22px;
    align-self: flex-start;
    margin-top: -9px;
  }

  .small {
    font-size: 35px;
  }

  .up {
    color: #cc3333;
  }

  .down {
    color: #129412;
  }

  .more {
    width: 125px;
    height: 57px;
    border: 2px solid #e4e8ea;
    border-radius: 8px;
    font-size: 35px;
    padding-bottom: 5px;
    color: #222;
  }

  /* Notice */
  .notice {
    height: 106px;
    display: flex;
    align-items: center;
    padding: 0 30px 0 34px;
    border-bottom: 2px solid #dcdcdc;
    box-sizing: border-box;
  }

  .notice p {
    flex: 1;
    margin-left: 32px;
    font-size: 38.700px;
    padding-bottom: 5px;
  }

  /* Period tabs */
  .tabs {
    height: 103px;
    display: flex;
    align-items: center;
    padding-left: 36px;
    color: #666;
    border-bottom: 2px solid #dcdcdc;
    box-sizing: border-box;
  }

  .tab {
    font-size: 44px;
    height: 100%;
    width: 89px;
    margin-right: 75px;
    padding-bottom: 5px;
    position: relative;
  }

  .tab:nth-child(2) {
    margin-right: 81px;
  }

  .tab:nth-child(3),
  .tab:nth-child(4),
  .tab:nth-child(5) {
    width: 76px;
    margin-right: 87.500px;
  }

  .tab:nth-child(5) {
    margin-right: 81px;
  }

  .tab.active {
    color: #dd5510;
  }

  .tab.active::after {
    content: '';
    position: absolute;
    left: 8px;
    bottom: 7px;
    width: 60px;
    height: 7px;
    border-radius: 4px;
    background: #dd5510;
  }

  .tab.menu {
    width: 112px;
    margin-right: 49px;
    display: flex;
    align-items: center;
    gap: 9px;
  }

  .tab.menu svg {
    margin-top: 5px;
  }

  /* Indicator toolbar */
  .toolbar {
    height: 62px;
    display: flex;
    align-items: center;
    padding: 0 0 0 16px;
    flex: none;
  }

  .pill {
    height: 46px;
    border: 2px solid #e2e4e8;
    border-radius: 8px;
    background: #f6f7fa;
    color: #222;
    font-size: 36px;
    padding: 0 7px 5px 6px;
    box-sizing: border-box;
    display: flex;
    align-items: center;
    justify-content: space-between;
    flex: none;
  }

  .pill svg {
    margin-top: 6px;
  }

  .avg {
    width: 109px;
    font-size: 35px;
    padding-left: 7px;
  }

  .readout {
    font-size: 36.500px;
  }

  .toolbar .readout {
    margin-left: 3px;
  }

  .dk {
    width: 126px;
    height: 46px;
    margin-left: 122px;
    border-radius: 7px;
    background: #ea5504;
    color: #fff;
    font-size: 35.500px;
    display: flex;
    align-items: center;
    justify-content: space-between;
    padding: 0 5px 5px 13px;
    box-sizing: border-box;
  }

  .dk svg {
    margin-top: 26px;
  }

  .adjust {
    width: 133px;
    margin-left: 39px;
    font-size: 35.500px;
    padding: 0 0 4px;
    justify-content: center;
  }

  /* Charts */
  .body {
    display: flex;
    gap: 17px;
    padding-left: 12px;
    height: 1294px;
    flex: none;
  }

  .charts {
    width: 705px;
  }

  .plot :global(*) {
    vector-effect: non-scaling-stroke;
  }

  .panel-head {
    height: 62px;
    display: flex;
    align-items: center;
    padding-left: 5px;
    position: relative;
  }

  .panel-head .pill {
    margin-top: 1px;
  }

  .expand {
    position: absolute;
    right: 0;
    top: 1px;
    width: 45px;
    height: 61px;
    border-radius: 13px 0 0 13px;
    background: #999;
    display: flex;
    align-items: center;
    justify-content: center;
    padding-left: 5px;
  }

  .panel {
    position: relative;
    height: 128px;
  }

  .axis {
    position: absolute;
    left: 5px;
    font-size: 37px;
    fill: #8c8c8c;
  }

  .axis.top {
    top: 7px;
  }

  .axis.upper {
    top: 13px;
  }

  .axis.bottom {
    top: 93px;
  }

  .timeline {
    height: 84px;
    margin-top: 4px;
    background: #f7f8fa;
  }

  .dates {
    display: flex;
    justify-content: space-between;
    font-size: 37.500px;
    line-height: 35px;
    color: #666;
    padding: 0 14px 0 4px;
  }

  .dates span:nth-child(2) {
    margin-left: -57px;
  }

  .slider {
    height: 18px;
    margin-top: 15px;
    border-radius: 9px;
    background: #f1f1f4;
    display: flex;
    justify-content: space-between;
    align-items: center;
    padding: 0 6px;
  }

  .thumb {
    width: 47px;
    height: 30px;
    border-radius: 7px;
    background: #fff;
    box-shadow: 0 1px 6px rgba(0, 0, 0, 0.16);
    display: flex;
    align-items: center;
    justify-content: center;
    gap: 5px;
  }

  .thumb i {
    width: 2px;
    height: 16px;
    background: #777;
  }

  /* Cost distribution */
  .chips {
    width: 341px;
  }

  .legend {
    height: 62px;
    display: flex;
    justify-content: space-between;
    align-items: center;
    font-size: 29.500px;
    color: #666;
    padding-left: 1px;
    line-height: 30px;
  }

  .legend span {
    display: flex;
    align-items: center;
    gap: 9px;
    padding-bottom: 3px;
  }

  .legend i {
    width: 15px;
    height: 15px;
    margin-top: 4px;
  }

  .green {
    background: #5cb846;
  }

  .red {
    background: #e84a4a;
  }

  .blue {
    background: #3280e0;
  }

  .row {
    height: 44px;
    display: flex;
    justify-content: space-between;
    align-items: center;
    font-size: 30px;
    color: #666;
    padding: 0 1px;
  }

  .legend + .row {
    margin-top: -5px;
  }

  .row span {
    display: flex;
    align-items: center;
    padding-bottom: 2px;
  }

  .row b {
    color: #333;
    font-size: 30.500px;
    letter-spacing: -1.700px;
    padding-bottom: 2px;
    margin-right: -1.500px;
  }

  .row em {
    width: 30px;
    height: 30px;
    margin-left: 13px;
    border-radius: 50%;
    background: #ccc;
    color: #fff;
    font-style: normal;
    font-weight: bold;
    font-size: 24px;
    line-height: 25px;
    text-align: center;
  }

  .segment {
    height: 72px;
    margin: 9px 1px 7px;
    border-radius: 7px;
    background: #f7f8fa;
    display: flex;
    padding: 6px;
    box-sizing: border-box;
  }

  .segment button {
    flex: 1;
    font-size: 32px;
    color: #666;
    border-radius: 7px;
    padding: 0 0 4px 3px;
  }

  .segment .on {
    background: #fff;
    color: #333;
    font-weight: bold;
    letter-spacing: -1.200px;
    padding-left: 0;
  }

  /* Promotion */
  .promo {
    height: 90px;
    margin: 15px 18px 16px;
    border-radius: 45px;
    background: #fceee5;
    color: #dd5a14;
    display: flex;
    align-items: center;
    padding: 0 38px 0 29px;
    box-sizing: border-box;
    flex: none;
  }

  .promo p {
    flex: 1;
    margin-left: 53px;
    font-size: 39px;
    padding-bottom: 6px;
  }

  .bar {
    width: 2px;
    height: 36px;
    background: #dd9468;
    margin-right: 16px;
  }

  /* Bottom bar */
  .footer {
    flex: 1;
    border-top: 2px solid #dadada;
    display: flex;
    background: linear-gradient(#fff 0 6px, #dadada 6px 8px, #f7f8fa 8px);
    color: #666;
  }

  .index {
    width: 275px;
    display: flex;
    flex-direction: column;
    align-items: center;
    padding-top: 17px;
    box-sizing: border-box;
  }

  .points {
    font-size: 38.500px;
    color: #cc3333;
    margin-top: 11px;
  }

  .sector {
    font-size: 35.500px;
    margin: 13px 0 0 5px;
  }

  .sector b {
    font-weight: 400;
    color: #cc3333;
    margin-left: 17px;
    letter-spacing: -0.5px;
  }

  .item {
    width: 207px;
    display: flex;
    flex-direction: column;
    align-items: center;
    padding-top: 18px;
    box-sizing: border-box;
    font-size: 35.500px;
  }

  .item span {
    margin-top: 17px;
  }
</style>
